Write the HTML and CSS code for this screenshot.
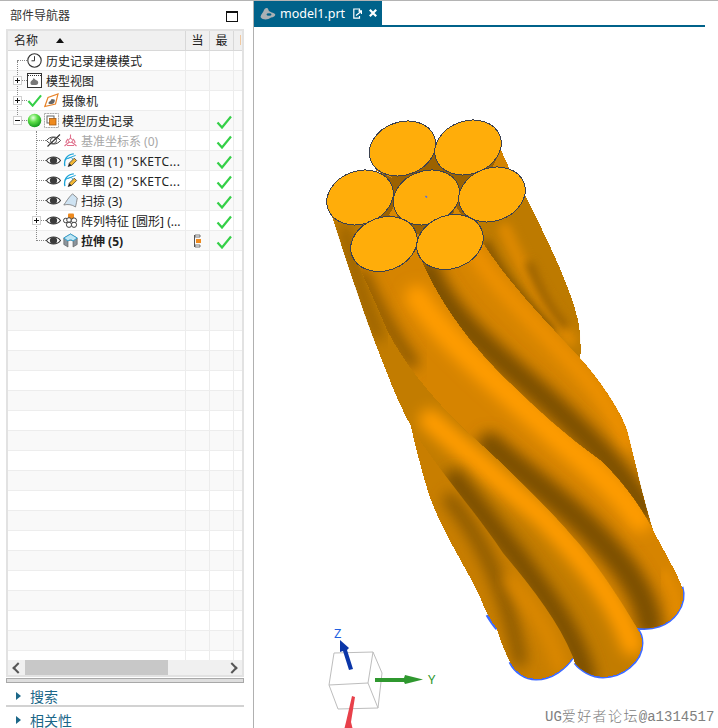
FILE: index.html
```html
<!DOCTYPE html>
<html>
<head>
  <title>model1.prt</title>
  <link rel="stylesheet" href="styles.css">
</head>

<body>
  <svg class="icon-defs" width="0" height="0">
    <defs>
      <radialGradient id="ball" cx="40%" cy="30%" r="70%">
        <stop offset="0" stop-color="#e6ffe0"/>
        <stop offset="0.45" stop-color="#5fe04a"/>
        <stop offset="1" stop-color="#129a1c"/>
      </radialGradient>
      <symbol id="i-check" viewBox="0 0 16 14">
        <path d="M1.5 7.5 L6 12.5 L15 1.5" fill="none" stroke="#35cf48" stroke-width="2.2"/>
      </symbol>
      <symbol id="i-eye" viewBox="0 0 15 15">
        <path d="M0.5 7.5 C4 2.8 11 2.8 14.5 7.5 C11 12.2 4 12.2 0.5 7.5 Z" fill="#fff" stroke="#333" stroke-width="1.1"/>
        <circle cx="7.5" cy="7.5" r="3.6" fill="#3c3c3c"/>
      </symbol>
      <symbol id="i-eye-off" viewBox="0 0 15 15">
        <path d="M0.5 7.5 C4 2.8 11 2.8 14.5 7.5 C11 12.2 4 12.2 0.5 7.5 Z" fill="#fff" stroke="#444" stroke-width="1"/>
        <circle cx="7.5" cy="7.5" r="3" fill="none" stroke="#444"/>
        <path d="M1.5 13.5 L14 1.5" stroke="#333" stroke-width="1.1"/>
      </symbol>
      <symbol id="i-sketch" viewBox="0 0 15 16">
        <path d="M1.5 14 C0 7 4 1.5 11 1" fill="none" stroke="#1aa3d8" stroke-width="1.4"/>
        <path d="M1.5 7 L13 2.5 M5 6 C7 4 10 5 10 7" fill="none" stroke="#1aa3d8" stroke-width="1"/>
        <path d="M6 11 L11.5 5.5 L14 8 L8.5 13.5 Z" fill="#f2b632" stroke="#333" stroke-width="0.8"/>
        <path d="M6 11 L4.5 15 L8.5 13.5 Z" fill="#222"/>
      </symbol>
    </defs>
  </svg>

  <div class="app">
    <aside class="nav">
      <div class="nav-title">
        <span>部件导航器</span>
        <span class="maximize"></span>
      </div>

      <div class="tree">
        <div class="tree-head">
          <div class="cell head-name">名称<span class="sort-up"></span></div>
          <div class="cell head-col">当</div>
          <div class="cell head-col">最</div>
          <div class="cell"><span class="head-hint"></span></div>
        </div>

        <div class="tree-body">
          <span class="dots dots-root"></span>
          <span class="dots dots-child"></span>

          <div class="row">
            <div class="cell name">
              <span class="twig"></span>
              <svg class="ico" viewBox="0 0 15 15"><circle cx="7.5" cy="7.5" r="6.7" fill="#fff" stroke="#333" stroke-width="1.1"/><path d="M7.5 3.2 V7.8 H4.5" fill="none" stroke="#333"/></svg>
              <span class="label single">历史记录建模模式</span>
            </div>
            <div class="cell"></div><div class="cell"></div><div class="cell"></div>
          </div>
          <div class="row">
            <div class="cell name">
              <span class="twig"><span class="box plus"></span></span>
              <svg class="ico" viewBox="0 0 15 15"><rect x="0.5" y="0.5" width="14" height="14" fill="#fff" stroke="#333"/><path d="M1 2.5 H14" stroke="#333" stroke-dasharray="1 1" stroke-width="1.2"/><path d="M3.5 10 C3.5 7 6 8 6.5 5 C8 6 8 7 10 7.5 C12 8.5 11.5 12 9 12 H5 C4 12 3.5 11 3.5 10 Z" fill="#777"/></svg>
              <span class="label single">模型视图</span>
            </div>
            <div class="cell"></div><div class="cell"></div><div class="cell"></div>
          </div>
          <div class="row">
            <div class="cell name">
              <span class="twig"><span class="box plus"></span></span>
              <svg class="ico" viewBox="0 0 16 14"><use href="#i-check"/></svg>
              <svg class="ico" viewBox="0 0 15 15"><path d="M0.8 13.5 L4 4.5 L14 1 L11.5 11 Z" fill="#fff" stroke="#e8842a" stroke-width="1.2"/><path d="M4.5 10.5 C4.5 8 7 8.5 7.5 6 L10.5 6.5 C11.5 8 10 11 8 11 H5.5 Z" fill="#666"/></svg>
              <span class="label">摄像机</span>
            </div>
            <div class="cell"></div><div class="cell"></div><div class="cell"></div>
          </div>
          <div class="row">
            <div class="cell name">
              <span class="twig"><span class="box"></span></span>
              <svg class="ico" viewBox="0 0 15 15"><circle cx="7.5" cy="7.5" r="6.8" fill="url(#ball)"/></svg>
              <svg class="ico" viewBox="0 0 15 15"><rect x="0.5" y="0.5" width="14" height="14" fill="#fff" stroke="#aaa" stroke-dasharray="2 0.6"/><rect x="3" y="3" width="7" height="7" fill="#fff" stroke="#666"/><rect x="5.5" y="5.5" width="6.5" height="6.5" fill="#ee8a1e" stroke="#a85a10" stroke-width="0.8"/></svg>
              <span class="label">模型历史记录</span>
            </div>
            <div class="cell"></div><div class="cell"></div>
            <div class="cell"></div>
          </div>
          <div class="row">
            <div class="cell name child">
              <span class="twig"></span>
              <svg class="ico"><use href="#i-eye-off"/></svg>
              <svg class="ico" viewBox="0 0 15 15"><path d="M7.5 6 V1.5 M7.5 8 L1.5 13 M7.5 8 L13.5 13 M4 12.5 H11 M5 6 C3 8 3 10 3 10 M10 6 C12 8 12 10 12 10" fill="none" stroke="#e0708c" stroke-width="1.1"/><circle cx="7.5" cy="7.5" r="2" fill="#fff" stroke="#e0708c"/></svg>
              <span class="label muted">基准坐标系 (0)</span>
            </div>
            <div class="cell"></div><div class="cell"></div><div class="cell"></div>
          </div>
          <div class="row">
            <div class="cell name child">
              <span class="twig"></span>
              <svg class="ico"><use href="#i-eye"/></svg>
              <svg class="ico"><use href="#i-sketch"/></svg>
              <span class="label">草图 <span class="sketch-name">(1) "SKETC...</span></span>
            </div>
            <div class="cell"></div><div class="cell"></div><div class="cell"></div>
          </div>
          <div class="row">
            <div class="cell name child">
              <span class="twig"></span>
              <svg class="ico"><use href="#i-eye"/></svg>
              <svg class="ico"><use href="#i-sketch"/></svg>
              <span class="label">草图 <span class="sketch-name">(2) "SKETC...</span></span>
            </div>
            <div class="cell"></div><div class="cell"></div><div class="cell"></div>
          </div>
          <div class="row">
            <div class="cell name child">
              <span class="twig"></span>
              <svg class="ico"><use href="#i-eye"/></svg>
              <svg class="ico" viewBox="0 0 15 15"><path d="M0.8 12 C3 9 5 5 9.5 0.8 L14.3 5 C13.5 8 13.5 11 12.5 14 C9 11.5 5 11 0.8 12 Z" fill="#cfe3f2" stroke="#777" stroke-width="0.8"/></svg>
              <span class="label">扫掠 (3)</span>
            </div>
            <div class="cell"></div><div class="cell"></div><div class="cell"></div>
          </div>
          <div class="row">
            <div class="cell name child">
              <span class="twig"><span class="box plus"></span></span>
              <svg class="ico"><use href="#i-eye"/></svg>
              <svg class="ico" viewBox="0 0 15 15"><rect x="5" y="0.5" width="6" height="5.5" rx="1" fill="#ee8a1e"/><g fill="#fff" stroke="#444"><circle cx="2.8" cy="7.5" r="2.3"/><circle cx="6" cy="7" r="2.3"/><circle cx="11" cy="7.5" r="2.6"/><circle cx="6" cy="11.8" r="2.6"/><circle cx="11" cy="11.8" r="2.6"/></g></svg>
              <span class="label">阵列特征 [圆形] (...</span>
            </div>
            <div class="cell"></div><div class="cell"></div><div class="cell"></div>
          </div>
          <div class="row">
            <div class="cell name child">
              <span class="twig"></span>
              <svg class="ico"><use href="#i-eye"/></svg>
              <svg class="ico" viewBox="0 0 15 15"><path d="M0.8 5 L7.5 1 L14.2 5 V11.5 L10 14 V8.5 C9.5 6.8 5.5 6.8 5 8.5 V14 L0.8 11.5 Z" fill="#8a949c" stroke="#555" stroke-width="0.6"/><path d="M0.8 5 L7.5 1 L14.2 5 L10 8 C9 6.5 6 6.5 5 8 Z" fill="#bfe6f4" stroke="#2a9fd0" stroke-width="0.9"/></svg>
              <span class="label strong">拉伸 (5)</span>
            </div>
            <div class="cell centered">
              <svg class="ico-dep" viewBox="0 0 7 14"><path d="M1 1 H6 V3 H1 Z M1 11 H6 V13 H1 Z" fill="#fff" stroke="#555" stroke-width="0.8"/><rect x="2" y="5" width="5" height="4" fill="#ee8a1e"/><path d="M0.5 1 V13" stroke="#555"/></svg>
            </div>
            <div class="cell"></div><div class="cell"></div>
          </div>

          <div class="row"><div class="cell name"></div><div class="cell"></div><div class="cell"></div><div class="cell"></div></div>
          <div class="row"><div class="cell name"></div><div class="cell"></div><div class="cell"></div><div class="cell"></div></div>
          <div class="row"><div class="cell name"></div><div class="cell"></div><div class="cell"></div><div class="cell"></div></div>
          <div class="row"><div class="cell name"></div><div class="cell"></div><div class="cell"></div><div class="cell"></div></div>
          <div class="row"><div class="cell name"></div><div class="cell"></div><div class="cell"></div><div class="cell"></div></div>
          <div class="row"><div class="cell name"></div><div class="cell"></div><div class="cell"></div><div class="cell"></div></div>
          <div class="row"><div class="cell name"></div><div class="cell"></div><div class="cell"></div><div class="cell"></div></div>
          <div class="row"><div class="cell name"></div><div class="cell"></div><div class="cell"></div><div class="cell"></div></div>
          <div class="row"><div class="cell name"></div><div class="cell"></div><div class="cell"></div><div class="cell"></div></div>
          <div class="row"><div class="cell name"></div><div class="cell"></div><div class="cell"></div><div class="cell"></div></div>
          <div class="row"><div class="cell name"></div><div class="cell"></div><div class="cell"></div><div class="cell"></div></div>
          <div class="row"><div class="cell name"></div><div class="cell"></div><div class="cell"></div><div class="cell"></div></div>
          <div class="row"><div class="cell name"></div><div class="cell"></div><div class="cell"></div><div class="cell"></div></div>
          <div class="row"><div class="cell name"></div><div class="cell"></div><div class="cell"></div><div class="cell"></div></div>
          <div class="row"><div class="cell name"></div><div class="cell"></div><div class="cell"></div><div class="cell"></div></div>
          <div class="row"><div class="cell name"></div><div class="cell"></div><div class="cell"></div><div class="cell"></div></div>
          <div class="row"><div class="cell name"></div><div class="cell"></div><div class="cell"></div><div class="cell"></div></div>
          <div class="row"><div class="cell name"></div><div class="cell"></div><div class="cell"></div><div class="cell"></div></div>
          <div class="row"><div class="cell name"></div><div class="cell"></div><div class="cell"></div><div class="cell"></div></div>
          <div class="row"><div class="cell name"></div><div class="cell"></div><div class="cell"></div><div class="cell"></div></div>
          <div class="row"><div class="cell name"></div><div class="cell"></div><div class="cell"></div><div class="cell"></div></div>

          <svg class="checks" viewBox="0 0 16 134" width="16" height="134">
            <use href="#i-check" y="0" width="16" height="14"/>
            <use href="#i-check" y="20" width="16" height="14"/>
            <use href="#i-check" y="40" width="16" height="14"/>
            <use href="#i-check" y="60" width="16" height="14"/>
            <use href="#i-check" y="80" width="16" height="14"/>
            <use href="#i-check" y="100" width="16" height="14"/>
            <use href="#i-check" y="120" width="16" height="14"/>
          </svg>
        </div>

        <div class="scrollbar">
          <span class="arrow left"></span>
          <div class="track"><span class="thumb"></span></div>
          <span class="arrow right"></span>
        </div>
      </div>

      <div class="splitter"></div>
      <div class="panel"><span class="panel-arrow"></span>搜索</div>
      <div class="panel last"><span class="panel-arrow"></span>相关性</div>
    </aside>

    <main class="main">
      <div class="tabs">
        <div class="tab">
          <svg class="tab-icon" viewBox="0 0 16 13"><path d="M0.5 10 C1 7 3 6 4 3 C5 0.5 8 0 8.5 3 C9 5 12 5 15 7 C16 8.5 14 10.5 11 10.5 C8 13 3 13.5 0.5 10 Z" fill="#a9b0b4"/><ellipse cx="9" cy="7.5" rx="2.5" ry="1.2" fill="#00628a"/></svg>
          <span class="tab-name">model1.prt</span>
          <svg class="tab-doc" viewBox="0 0 9 11"><path d="M6.5 3 V1 H0.8 V10.2 H6.5 V8" fill="none" stroke="#fff" stroke-width="1.2"/><path d="M3 7.5 L8 3.5 M5.5 3 H8.5 V6" fill="none" stroke="#fff" stroke-width="1.3"/></svg>
          <svg class="tab-close" viewBox="0 0 8 8"><path d="M0.8 0.8 L7.2 7.2 M7.2 0.8 L0.8 7.2" stroke="#fff" stroke-width="2.2"/></svg>
        </div>
      </div>

      <svg class="scene" viewBox="254 27 464 701" width="464" height="701">
        <defs>
          <filter id="soft" x="-30%" y="-30%" width="160%" height="160%"><feGaussianBlur stdDeviation="7"/></filter>
          <filter id="softer" x="-30%" y="-30%" width="160%" height="160%"><feGaussianBlur stdDeviation="4"/></filter>
          <path id="s2" d="M525 195 C545 235 570 285 578 320 C581 335 581 348 580 370 L500 290 L470 215 Z"/>
          <path id="s3" d="M483 243 C510 285 545 320 580 358 C600 380 620 410 627 430 C635 460 642 495 653 530 L620 510 L540 430 L470 360 L420 270 L420 240 Z"/>
          <path id="s4" d="M430 235 L420 257 C440 305 475 350 510 383 C540 412 565 435 600 460 C620 478 640 505 653 530 C665 553 678 575 682 587 C685 597 682 606 677 613 C668 626 652 630 637 628 L600 590 L540 525 L440 430 L375 320 L352 250 L385 230 Z"/>
          <path id="s5" d="M328 205 C345 255 365 320 387 373 C394 392 403 412 413 430 C440 472 478 515 503 553 C530 585 558 620 573 657 L575 663 C580 670 592 677 603 677 C622 677 642 662 642 643 C642 636 640 633 637 628 C615 590 590 555 573 537 C555 515 500 460 465 430 C430 395 405 365 387 330 C375 300 360 270 352 250 L390 200 Z"/>
          <path id="s6" d="M410 423 C420 465 428 495 435 510 C445 535 470 575 480 597 C484 608 490 620 497 629 C500 640 505 652 510 662 C515 672 525 679 536 679 C552 679 566 668 573 657 L560 600 L500 530 L430 440 Z"/>
          <clipPath id="clip2"><use href="#s2"/></clipPath>
          <clipPath id="clip3"><use href="#s3"/></clipPath>
          <clipPath id="clip4"><use href="#s4"/></clipPath>
          <clipPath id="clip5"><use href="#s5"/></clipPath>
          <clipPath id="clip6"><use href="#s6"/></clipPath>
        </defs>

        <!-- blue rims, only the outer half shows past the strands -->
        <path class="rim" d="M487 615 C490 620 493 625 497 629"/>
        <path class="rim" d="M510 662 C515 672 525 679 536 679 C552 679 566 668 573 657"/>
        <path class="rim" d="M575 663 C580 670 592 677 603 677 C622 677 642 662 642 643 C642 636 640 633 637 628"/>
        <path class="rim" d="M637 628 C652 630 668 626 677 613 C682 606 685 597 682 587"/>

        <!-- back of the bundle, seen in the gaps between the end caps -->
        <path class="solid" d="M385 172 L436 150 L501 150 L510 170 L525 197 L470 250 L380 240 L340 200 Z" fill="#9c6200"/>
        <path class="solid" d="M501 150 L510 170 L490 172 Z" fill="#d48400"/>
        <path class="solid" d="M375 170 L385 162 L392 178 Z M389 215 L395 205 L398 222 Z M455 205 L461 214 L452 222 Z" fill="#d98800"/>

        <!-- strands, back to front -->
        <use class="solid" href="#s2" fill="#bd7a00"/>
        <g clip-path="url(#clip2)">
          <path class="band" d="M505 230 C520 265 540 300 570 340" stroke="#dc8800" stroke-width="14" filter="url(#softer)"/>
          <path class="band" d="M486 245 C500 275 525 305 550 330" stroke="#855500" stroke-width="10" filter="url(#softer)"/>
          <path class="band" d="M530 265 C540 290 552 310 565 325" stroke="#945e00" stroke-width="8" filter="url(#softer)"/>
        </g>

        <use class="solid" href="#s3" fill="#d58400"/>
        <g clip-path="url(#clip3)">
          <path class="band" d="M470 245 C495 290 560 345 600 395 C610 410 620 425 627 445" stroke="#f29300" stroke-width="14" filter="url(#soft)"/>
          <path class="band" d="M428 270 C450 325 510 365 560 412 C590 440 620 470 645 510" stroke="#7c4f00" stroke-width="24" filter="url(#soft)"/>
        </g>

        <use class="solid" href="#s6" fill="#c87e00"/>
        <g clip-path="url(#clip6)">
          <path class="band" d="M450 500 C475 530 505 580 520 660" stroke="#8a5800" stroke-width="14" filter="url(#soft)"/>
          <path class="band" d="M510 580 C530 605 550 630 560 668" stroke="#e08a00" stroke-width="12" filter="url(#soft)"/>
        </g>

        <use class="solid" href="#s4" fill="#d68400"/>
        <g clip-path="url(#clip4)">
          <path class="band" d="M417 297 C445 340 500 385 553 433 C585 462 615 485 640 520" stroke="#ff9c00" stroke-width="24" filter="url(#soft)"/>
          <path class="band" d="M362 275 C380 315 395 340 412 362" stroke="#8a5800" stroke-width="14" filter="url(#soft)"/>
          <path class="band" d="M490 445 C520 472 560 500 590 530 C620 560 645 590 650 625" stroke="#7c4f00" stroke-width="26" filter="url(#soft)"/>
          <path class="band" d="M665 575 C672 590 678 600 676 612" stroke="#e48c00" stroke-width="10" filter="url(#softer)"/>
        </g>

        <use class="solid" href="#s5" fill="#c27c00"/>
        <g clip-path="url(#clip5)">
          <path class="band" d="M345 230 C352 265 365 305 378 335" stroke="#945e00" stroke-width="12" filter="url(#soft)"/>
          <path class="band" d="M430 420 C470 455 510 490 543 517 C575 550 615 595 632 645" stroke="#ff9c00" stroke-width="22" filter="url(#soft)"/>
          <path class="band" d="M455 480 C475 505 495 530 515 555 C540 590 570 625 585 675" stroke="#7c4f00" stroke-width="22" filter="url(#soft)"/>
        </g>

        <!-- end caps -->
        <g class="caps">
          <ellipse cx="402.5" cy="148.5" rx="34" ry="26.5" transform="rotate(-20 402.5 148.5)"/>
          <ellipse cx="468" cy="147.5" rx="34" ry="26.5" transform="rotate(-20 468 147.5)"/>
          <ellipse cx="360" cy="197.5" rx="34" ry="26.5" transform="rotate(-20 360 197.5)"/>
          <ellipse cx="426.5" cy="197.5" rx="34" ry="26.5" transform="rotate(-20 426.5 197.5)"/>
          <ellipse cx="492" cy="194.5" rx="34" ry="26.5" transform="rotate(-20 492 194.5)"/>
          <ellipse cx="384" cy="244" rx="34" ry="26.5" transform="rotate(-20 384 244)"/>
          <ellipse cx="450" cy="242" rx="34" ry="26.5" transform="rotate(-20 450 242)"/>
        </g>
        <path d="M425.5 196 L427 197.5" stroke="#3f6bff" stroke-width="1.5"/>

        <!-- orientation triad -->
        <path class="cube" d="M334 653 L373 652 L382 673 L378 708 L338 709 L329 685 Z M329 685 L368 683 L373 652 M368 683 L378 708"/>
        <path d="M353 669 L349 670 L343 651 L340 652 L340 640 L349 648 L347 650 Z" fill="#0b36a8"/>
        <path d="M375 678 H404 L405 675 L423 679.5 L405 684 L404 682 H375 Z" fill="#2f982f"/>
        <path d="M352 696 L355 697 L351 722 L353 730 L344 730 L346 722 Z" fill="#e8404a"/>
        <text class="axis axis-z" x="334" y="638">Z</text>
        <text class="axis axis-y" x="428" y="684">Y</text>

        <text class="mark" x="545" y="721">UG<tspan class="mark-cjk">爱好者论坛</tspan>@a1314517</text>
      </svg>
    </main>
  </div>
</body>
</html>
```

FILE: styles.css
```css
* {
  box-sizing: border-box;
}

html, body {
  margin: 0;
  height: 100%;
  background: #fff;
}

body {
  font-family: "Noto Sans", "Noto Sans CJK SC", sans-serif;
  font-size: 12px;
  color: #222;
  overflow: hidden;
}

.icon-defs {
  position: absolute;
}

.app {
  display: flex;
  height: 728px;
  border-top: 1px solid #b4b4b4;
  overflow: hidden;
}

/* left panel */
.nav {
  width: 254px;
  flex: none;
  padding-left: 6px;
  border-right: 1px solid #b0b0b0;
}

.nav-title {
  height: 28px;
  padding: 0 6px 0 4px;
  display: flex;
  align-items: center;
  justify-content: space-between;
  color: #333;
  width: 238px;
}

.maximize {
  width: 12px;
  height: 11px;
  margin-top: 3px;
  border: 1px solid #111;
  border-top-width: 2px;
}

.tree {
  width: 238px;
  height: 648px;
  border: 2px solid #e2e2e2;
}

.tree-head, .row {
  display: grid;
  grid-template-columns: 178px 24px 24px 8px;
}

.tree-head {
  height: 20px;
  background: #f0f0f0;
  border-bottom: 1px solid #d8d8d8;
}

.cell {
  border-right: 1px solid #ececec;
  min-width: 0;
}

.tree-head .cell {
  border-right-color: #d8d8d8;
  line-height: 19px;
}

.tree-head .cell:last-child, .row .cell:last-child {
  border-right: 0;
}

.head-name {
  padding-left: 6px;
  position: relative;
}

.sort-up {
  position: absolute;
  left: 48px;
  top: 7px;
  border: 4.5px solid transparent;
  border-top: 0;
  border-bottom: 5px solid #111;
}

.head-col {
  text-align: center;
}

.head-hint {
  display: block;
  width: 1px;
  height: 10px;
  margin: 4px 0 0 6px;
  background: #f0c8a0;
}

.tree-body {
  position: relative;
  height: 609px;
  overflow: hidden;
}

.row {
  height: 20px;
  border-bottom: 1px solid #ededed;
}

.row:nth-of-type(even) {
  background: #f9f9f9;
}

.name {
  display: flex;
  align-items: center;
  gap: 2px;
  padding-left: 5px;
  white-space: nowrap;
}

.name.child {
  padding-left: 24px;
}

.centered {
  display: flex;
  align-items: center;
  justify-content: center;
}

.ico {
  width: 15px;
  height: 15px;
  flex: none;
}

.ico-dep {
  width: 7px;
  height: 14px;
}

.label {
  margin-left: 1px;
}

.label.single {
  margin-left: 2px;
}

.sketch-name {
  letter-spacing: 0.45px;
}

.muted {
  color: #a8a8a8;
}

.strong {
  font-weight: 700;
}

/* tree connectors */
.twig {
  position: relative;
  width: 10px;
  height: 9px;
  margin-right: 2px;
  flex: none;
}

.twig::before {
  content: "";
  position: absolute;
  left: 4px;
  right: -4px;
  top: 4px;
  border-top: 1px dotted #888;
}

.box {
  position: absolute;
  left: 0;
  top: 0;
  width: 9px;
  height: 9px;
  background: #fff;
  border: 1px solid #d0d0d0;
}

.box::before {
  content: "";
  position: absolute;
  left: 1px;
  top: 3px;
  width: 5px;
  height: 1px;
  background: #111;
}

.box.plus::after {
  content: "";
  position: absolute;
  left: 3px;
  top: 1px;
  width: 1px;
  height: 5px;
  background: #111;
}

.dots {
  position: absolute;
  border-left: 1px dotted #888;
}

.dots-root {
  left: 9px;
  top: 10px;
  height: 60px;
}

.dots-child {
  left: 28px;
  top: 80px;
  height: 110px;
}

.checks {
  position: absolute;
  left: 208px;
  top: 64px;
}

/* horizontal scrollbar */
.scrollbar {
  height: 15px;
  display: flex;
  align-items: center;
  background: #f0f0f0;
}

.arrow {
  width: 17px;
  flex: none;
  display: flex;
  justify-content: center;
}

.arrow::before {
  content: "";
  width: 6px;
  height: 6px;
  border-left: 2px solid #555;
  border-bottom: 2px solid #555;
}

.arrow.left::before {
  transform: rotate(45deg);
  margin-left: 3px;
}

.arrow.right::before {
  transform: rotate(-135deg);
  margin-right: 3px;
}

.track {
  flex: 1;
  height: 15px;
}

.thumb {
  display: block;
  width: 143px;
  height: 15px;
  background: #c8c8c8;
}

/* bottom panels */
.splitter {
  width: 238px;
  height: 5px;
  margin-top: 1px;
  background: #dedede;
  border: 1px solid #a8a8a8;
}

.panel {
  width: 238px;
  height: 24px;
  padding: 3px 0 0 10px;
  display: flex;
  align-items: center;
  font-size: 14px;
  color: #1b6788;
  border-bottom: 2px solid #d2d2d2;
}

.panel.last {
  height: 22px;
  padding-top: 3px;
  border-bottom: 0;
}

.panel-arrow {
  width: 0;
  height: 0;
  margin-right: 9px;
  border-left: 5px solid #1b6788;
  border-top: 4px solid transparent;
  border-bottom: 4px solid transparent;
}

/* tab strip */
.main {
  flex: 1;
  min-width: 0;
}

.tabs {
  width: 451px;
  height: 26px;
  border-bottom: 2px solid #00628a;
}

.tab {
  width: 128px;
  height: 24px;
  display: flex;
  align-items: center;
  padding-left: 6px;
  background: #00628a;
  color: #fff;
  font-size: 12.5px;
}

.tab-icon {
  width: 16px;
  height: 13px;
  flex: none;
}

.tab-name {
  margin-left: 4px;
}

.tab-doc {
  width: 9px;
  height: 11px;
  margin-left: 8px;
  flex: none;
}

.tab-close {
  width: 8px;
  height: 8px;
  margin-left: 7px;
  flex: none;
}

/* 3D view */
.scene {
  display: block;
}

.solid, .caps ellipse {
  shape-rendering: crispEdges;
}

.band {
  fill: none;
  stroke-linecap: round;
  stroke-linejoin: round;
}

.rim {
  fill: none;
  stroke: #3f6bff;
  stroke-width: 3;
}

.caps ellipse {
  fill: #ffad0a;
  stroke: #3b4150;
  stroke-width: 1;
}

.cube {
  fill: none;
  stroke: #bdbdbd;
  stroke-width: 1;
}

.axis {
  font-size: 13px;
}

.axis-z {
  fill: #2060e0;
}

.axis-y {
  fill: #2f982f;
}

.mark {
  font-family: "Liberation Mono", monospace;
  font-size: 14px;
  fill: #808080;
}

.mark-cjk {
  font-family: "Noto Sans CJK SC", sans-serif;
  font-weight: 300;
  letter-spacing: 1.4px;
}
```
